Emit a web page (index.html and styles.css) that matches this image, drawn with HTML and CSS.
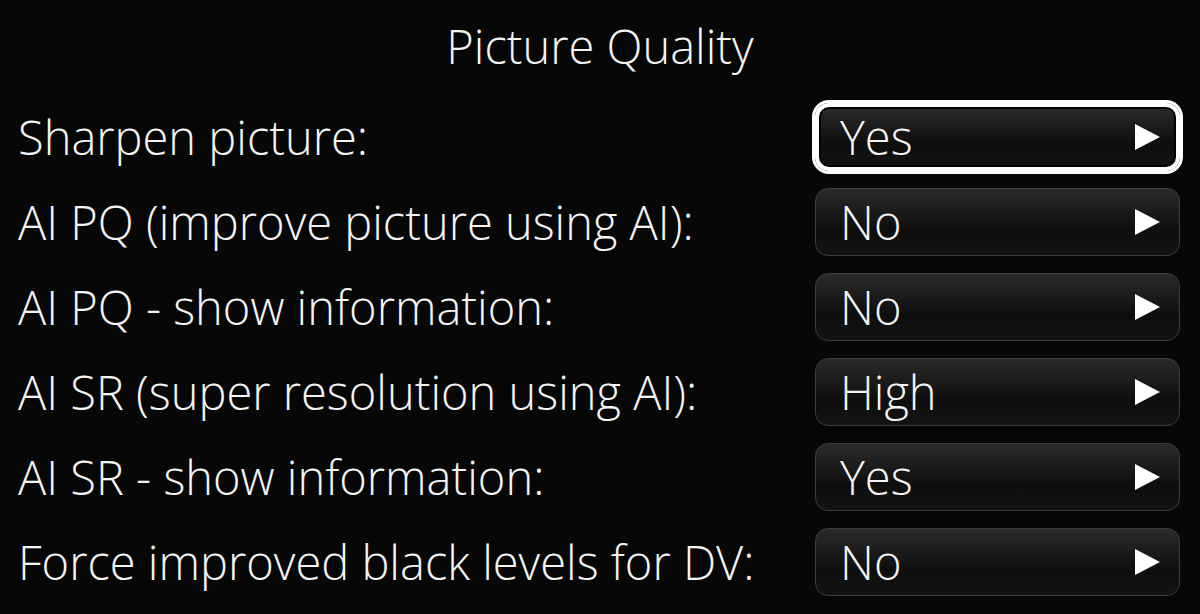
FILE: index.html
```html
<!DOCTYPE html>
<html lang="en">
<head>
<meta charset="utf-8">
<title>Picture Quality</title>
<link rel="stylesheet" href="styles.css">
</head>
<body>
<main class="screen">
  <h1 class="title">Picture Quality</h1>
  <ul class="settings">
    <li class="row">
      <span class="label">Sharpen picture:</span>
      <button class="value selected"><span class="value-text">Yes</span><span class="arrow"></span></button>
    </li>
    <li class="row">
      <span class="label">AI PQ (improve picture using AI):</span>
      <button class="value"><span class="value-text">No</span><span class="arrow"></span></button>
    </li>
    <li class="row">
      <span class="label">AI PQ - show information:</span>
      <button class="value"><span class="value-text">No</span><span class="arrow"></span></button>
    </li>
    <li class="row">
      <span class="label">AI SR (super resolution using AI):</span>
      <button class="value"><span class="value-text">High</span><span class="arrow"></span></button>
    </li>
    <li class="row">
      <span class="label">AI SR - show information:</span>
      <button class="value"><span class="value-text">Yes</span><span class="arrow"></span></button>
    </li>
    <li class="row">
      <span class="label">Force improved black levels for DV:</span>
      <button class="value"><span class="value-text">No</span><span class="arrow"></span></button>
    </li>
  </ul>
</main>
</body>
</html>
```
FILE: styles.css
```css
html, body {
  margin: 0;
  padding: 0;
  background: #070707;
}
body {
  width: 1200px;
  height: 614px;
  overflow: hidden;
  font-family: "Open Sans", "DejaVu Sans", sans-serif;
  font-weight: 300;
  color: #f4f4f4;
}
.screen {
  display: flex;
  flex-direction: column;
}
.title {
  margin: 0;
  height: 103px;
  display: flex;
  align-items: center;
  justify-content: center;
  font-size: 47px;
  font-weight: 300;
  padding-bottom: 11px;
  box-sizing: border-box;
  white-space: nowrap;
}
.settings {
  list-style: none;
  margin: 0;
  padding: 0 20px 0 18px;
  display: flex;
  flex-direction: column;
  gap: 17px;
}
.row {
  display: flex;
  align-items: center;
  justify-content: space-between;
  height: 68px;
}
.label {
  font-size: 47px;
  line-height: 1;
  white-space: nowrap;
}
.value {
  flex: none;
  width: 365px;
  height: 68px;
  box-sizing: border-box;
  display: flex;
  align-items: center;
  justify-content: space-between;
  padding: 0 19px 0 24px;
  border: 1px solid #3c3c3c;
  border-radius: 13px;
  background: linear-gradient(to bottom, #2a2a2a 0%, #1d1d1d 30%, #0e0e0e 62%, #131313 100%);
  color: #f4f4f4;
  font-family: inherit;
  font-size: 47px;
  font-weight: 300;
}
.value.selected {
  border: 4px solid #ffffff;
  border-radius: 14px;
  padding: 0 16px 0 21px;
  box-shadow: 0 0 0 3px #ffffff, inset 0 0 0 2px #000000;
}
.value-text {
  line-height: 1;
  white-space: nowrap;
}
.arrow {
  width: 0;
  height: 0;
  border-top: 13px solid transparent;
  border-bottom: 13px solid transparent;
  border-left: 25px solid #ffffff;
}
```
